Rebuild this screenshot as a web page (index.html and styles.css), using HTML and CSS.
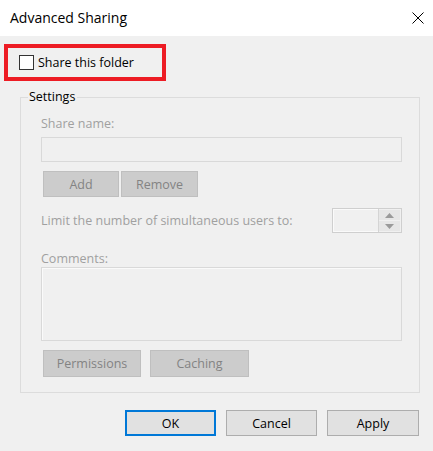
FILE: index.html
```html
<!DOCTYPE html>
<html>
<head>
<meta charset="utf-8">
<link rel="stylesheet" href="styles.css">
</head>
<body>
<div class="window">
  <div class="titlebar">
    <span class="title">Advanced Sharing</span>
    <svg class="close" width="12" height="12" viewBox="0 0 12 12"><path d="M0.5 0.5 L11.5 11.5 M11.5 0.5 L0.5 11.5" stroke="#000" stroke-width="1" fill="none"/></svg>
  </div>
  <div class="body">
    <div class="highlight">
      <span class="checkbox"></span>
      <span class="check-label">Share this folder</span>
    </div>
    <div class="group">
      <span class="legend">Settings</span>
      <div class="label">Share name:</div>
      <div class="field"></div>
      <div class="btn-row">
        <span class="btn dis w-add">Add</span>
        <span class="btn dis w-remove">Remove</span>
      </div>
      <div class="limit-row">
        <span class="label-inline">Limit the number of simultaneous users to:</span>
        <div class="spinner">
          <div class="spin-field"></div>
          <div class="spin-btns">
            <span class="spin-up"><svg width="9" height="5" viewBox="0 0 9 5"><path d="M0 5 L4.5 0 L9 5 Z" fill="#9a9a9a"/></svg></span>
            <span class="spin-down"><svg width="9" height="5" viewBox="0 0 9 5"><path d="M0 0 L4.5 5 L9 0 Z" fill="#9a9a9a"/></svg></span>
          </div>
        </div>
      </div>
      <div class="label comments">Comments:</div>
      <div class="area"></div>
      <div class="btn-row bottom-row">
        <span class="btn dis w-perm">Permissions</span>
        <span class="btn dis w-cache">Caching</span>
      </div>
    </div>
    <div class="footer">
      <span class="btn ok">OK</span>
      <span class="btn">Cancel</span>
      <span class="btn">Apply</span>
    </div>
  </div>
</div>
</body>
</html>
```
FILE: styles.css
```css
html, body {
  margin: 0;
  padding: 0;
}
body {
  width: 433px;
  height: 451px;
  background: #f0f0f0;
  font-family: "Open Sans", "Noto Sans", "Liberation Sans", sans-serif;
  font-size: 12.5px;
  color: #000;
  overflow: hidden;
}
.titlebar {
  height: 36px;
  background: #fff;
  display: flex;
  align-items: center;
  justify-content: space-between;
  padding: 0 9px 0 10px;
}
.title {
  font-size: 14px;
  margin-top: -2px;
}
.close {
  display: block;
}
.body {
  display: flex;
  flex-direction: column;
}
.highlight {
  margin: 8px 0 0 4px;
  width: 162px;
  height: 37px;
  box-sizing: border-box;
  border: 4px solid #ed1c24;
  display: flex;
  align-items: center;
  padding-left: 11px;
}
.checkbox {
  width: 15px;
  height: 15px;
  box-sizing: border-box;
  border: 1px solid #333;
  background: #fff;
  margin-right: 4px;
}
.check-label {
  line-height: 16px;
}
.group {
  position: relative;
  margin: 16px 0 0 20px;
  width: 400px;
  height: 296px;
  box-sizing: border-box;
  border: 1px solid #dcdcdc;
  padding: 18px 17px 0 20px;
  display: flex;
  flex-direction: column;
}
.legend {
  position: absolute;
  left: 7px;
  top: -9px;
  background: #f0f0f0;
  padding: 0 2px 0 1px;
  line-height: 16px;
  color: #000;
}
.label {
  color: #a0a0a0;
  line-height: 16px;
}
.field {
  margin-top: 5px;
  height: 25px;
  box-sizing: border-box;
  border: 1px solid #d9d9d9;
  background: #f0f0f0;
}
.btn-row {
  display: flex;
  gap: 2px;
  margin-top: 9px;
  padding-left: 2px;
}
.btn {
  display: flex;
  align-items: center;
  justify-content: center;
  height: 26px;
  box-sizing: border-box;
  border: 1px solid #adadad;
  background: #e1e1e1;
  width: 91px;
}
.btn.dis {
  background: #cccccc;
  border-color: #bfbfbf;
  color: #838383;
}
.w-add { width: 76px; }
.w-remove { width: 77px; }
.w-perm { width: 98px; }
.w-cache { width: 99px; }
.bottom-row {
  gap: 9px;
}
.bottom-row .btn {
  height: 27px;
}
.limit-row {
  display: flex;
  align-items: center;
  justify-content: space-between;
  margin-top: 11px;
}
.label-inline {
  color: #a0a0a0;
  margin-top: -1px;
}
.spinner {
  width: 70px;
  height: 25px;
  box-sizing: border-box;
  border: 1px solid #cfcfcf;
  display: flex;
}
.spin-field {
  flex: 1;
  border: 1px solid #fafafa;
  border-right: none;
}
.spin-btns {
  width: 21px;
  display: flex;
  flex-direction: column;
  gap: 1px;
  padding: 1px 1px 1px 0;
  background: #f0f0f0;
  border-left: 1px solid #d4d4d4;
}
.spin-btns span {
  flex: 1;
  background: #e6e6e6;
  display: flex;
  align-items: center;
  justify-content: center;
}
.spin-btns svg {
  display: block;
}
.comments {
  margin-top: 19px;
  line-height: 14px;
}
.area {
  margin-top: 1px;
  height: 74px;
  box-sizing: border-box;
  border: 1px solid #d9d9d9;
  box-shadow: inset 1px 1px 0 #fafafa;
}
.footer {
  display: flex;
  gap: 10px;
  margin: 17px 0 0 125px;
}
.footer .btn {
  height: 26px;
}
.footer .btn:last-child {
  width: 92px;
}
.btn.ok {
  border: 2px solid #0078d7;
}
```
